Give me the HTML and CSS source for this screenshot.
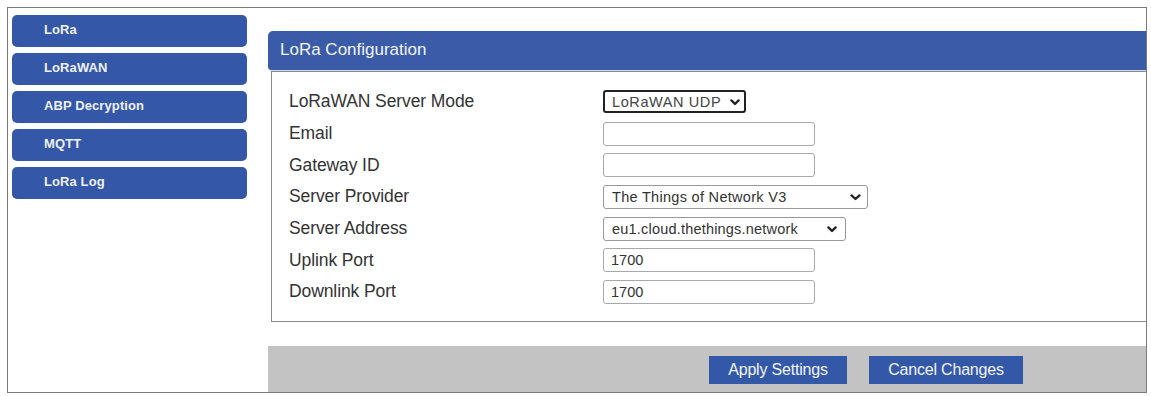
FILE: index.html
```html
<!DOCTYPE html>
<html>
<head>
<meta charset="utf-8">
<link rel="stylesheet" href="styles.css">
</head>
<body>
<div class="frame">
  <nav class="sidebar">
    <a class="nav-btn">LoRa</a>
    <a class="nav-btn">LoRaWAN</a>
    <a class="nav-btn">ABP Decryption</a>
    <a class="nav-btn">MQTT</a>
    <a class="nav-btn">LoRa Log</a>
  </nav>
  <main class="main">
    <div class="panel-title">LoRa Configuration</div>
    <div class="panel-body">
      <div class="form-grid">
        <label class="lbl">LoRaWAN Server Mode</label>
        <div class="field">
          <div class="sel-wrap">
            <select class="sel sel-mode"><option>LoRaWAN UDP</option></select>
            <svg class="chev chev-mode" width="10" height="7" viewBox="0 0 10 7"><path d="M1.4 1.4 L5 5 L8.6 1.4" fill="none" stroke="#222" stroke-width="2.3" stroke-linecap="round" stroke-linejoin="round"/></svg>
          </div>
        </div>
        <label class="lbl">Email</label>
        <div class="field"><input class="txt" type="text" value=""></div>
        <label class="lbl">Gateway ID</label>
        <div class="field"><input class="txt" type="text" value=""></div>
        <label class="lbl">Server Provider</label>
        <div class="field">
          <div class="sel-wrap">
            <select class="sel sel-provider"><option>The Things of Network V3</option></select>
            <svg class="chev chev-provider" width="11" height="7" viewBox="0 0 11 7"><path d="M1.5 1.4 L5.5 5 L9.5 1.4" fill="none" stroke="#222" stroke-width="2.3" stroke-linecap="round" stroke-linejoin="round"/></svg>
          </div>
        </div>
        <label class="lbl">Server Address</label>
        <div class="field">
          <div class="sel-wrap">
            <select class="sel sel-address"><option>eu1.cloud.thethings.network</option></select>
            <svg class="chev chev-address" width="10" height="7" viewBox="0 0 10 7"><path d="M1.4 1.4 L5 5 L8.6 1.4" fill="none" stroke="#222" stroke-width="2.3" stroke-linecap="round" stroke-linejoin="round"/></svg>
          </div>
        </div>
        <label class="lbl">Uplink Port</label>
        <div class="field"><input class="txt" type="text" value="1700"></div>
        <label class="lbl">Downlink Port</label>
        <div class="field"><input class="txt" type="text" value="1700"></div>
      </div>
    </div>
    <div class="footer">
      <button class="act-btn act-apply">Apply Settings</button>
      <button class="act-btn act-cancel">Cancel Changes</button>
    </div>
  </main>
</div>
</body>
</html>
```
FILE: styles.css
```css
* { box-sizing: border-box; }
html, body { margin: 0; padding: 0; background: #fff; }
body { font-family: "Liberation Sans", Arial, sans-serif; color: #333; }

.frame {
  margin: 7px 0 0 7px;
  width: 1140px;
  height: 386px;
  border: 1px solid #7a7a7a;
  display: flex;
}

.sidebar {
  width: 260px;
  flex: none;
  padding: 7px 0 0 4px;
  display: flex;
  flex-direction: column;
  gap: 6px;
}
.nav-btn {
  display: flex;
  align-items: center;
  width: 235px;
  height: 32px;
  padding: 0 0 4px 32px;
  background: #3557a7;
  border-radius: 5px;
  color: #eef1f8;
  font-weight: bold;
  font-size: 13px;
  letter-spacing: 0.1px;
}

.main {
  flex: 1;
  display: flex;
  flex-direction: column;
  padding-top: 23px;
}
.panel-title {
  height: 40px;
  background: #3a5ca8;
  border-radius: 5px 0 0 4px;
  color: #f2f4fa;
  font-size: 17px;
  display: flex;
  align-items: center;
  padding: 0 0 2px 12px;
  border-bottom: 1px solid #cfd6e8;
}
.panel-body {
  margin-left: 3px;
  border: 1px solid #8a8a8a;
  border-right: none;
  height: 251px;
  padding: 14px 0 0 17px;
}
.form-grid {
  display: grid;
  grid-template-columns: 314px auto;
  grid-auto-rows: 31.7px;
  align-items: center;
}
.lbl {
  font-size: 17.5px;
  color: #333;
  letter-spacing: -0.1px;
}
.field { display: flex; align-items: center; }
.txt {
  width: 212px;
  height: 24px;
  border: 1px solid #a9a9a9;
  border-radius: 3px;
  font-family: "Liberation Sans", Arial, sans-serif;
  font-size: 14.5px;
  color: #333;
  padding: 0 7px;
  background: #fff;
}

.sel-wrap { position: relative; display: flex; }
.sel {
  appearance: none;
  -webkit-appearance: none;
  height: 24px;
  border: 1px solid #999;
  border-radius: 3px;
  font-family: "Liberation Sans", Arial, sans-serif;
  font-size: 14.5px;
  color: #333;
  padding: 0 4px 0 8px;
  background: #fff;
}
.sel-mode {
  width: 143px;
  height: 23px;
  border: 2px solid #222;
  letter-spacing: 0.6px;
  color: #444;
  padding-left: 7px;
}
.sel-provider { width: 265px; letter-spacing: 0.3px; }
.sel-address { width: 243px; letter-spacing: 0.2px; }

.chev {
  position: absolute;
  top: 50%;
  pointer-events: none;
}
.chev-mode { right: 6px; margin-top: -3px; }
.chev-provider { right: 7px; margin-top: -3px; }
.chev-address { right: 9px; margin-top: -3px; }

.footer {
  margin-top: 24px;
  flex: 1;
  background: #c2c3c2;
  display: flex;
  gap: 22px;
  padding: 10px 0 0 441px;
}
.act-btn {
  height: 28px;
  padding: 0 10px;
  background: #3458a8;
  color: #f2f4fa;
  border: none;
  border-radius: 0;
  font-family: "Liberation Sans", Arial, sans-serif;
  font-size: 16px;
  letter-spacing: -0.2px;
}
.act-apply { width: 138px; }
.act-cancel { width: 154px; }
```
